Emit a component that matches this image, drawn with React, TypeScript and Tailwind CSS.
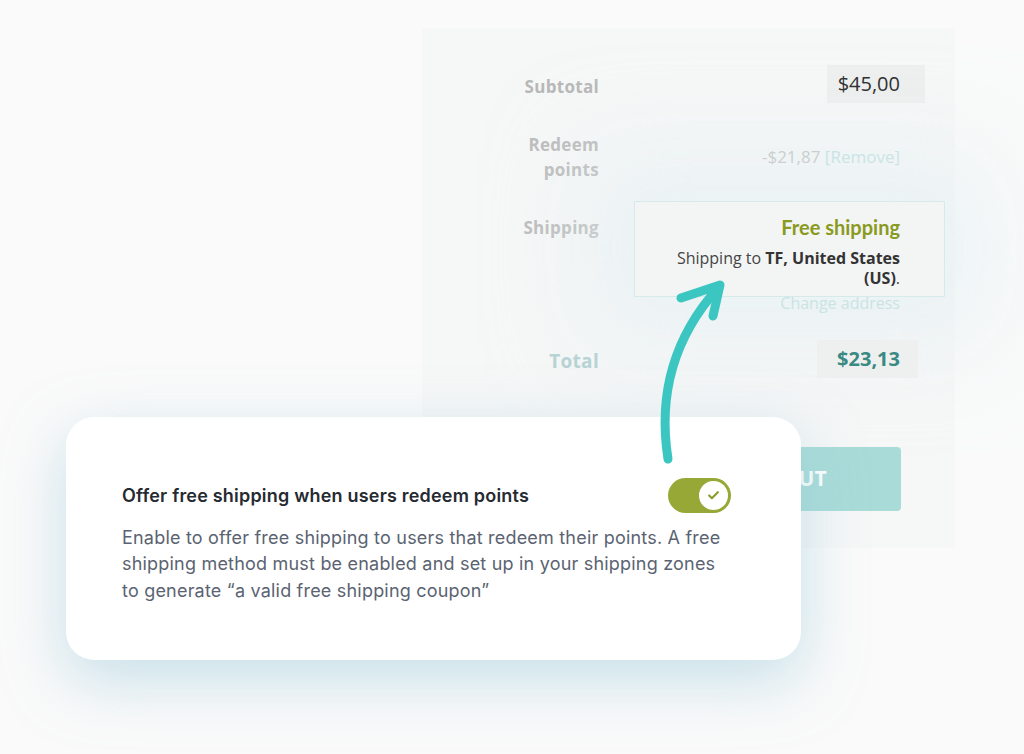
import { Check } from 'lucide-react';

// Cart total rows, values right-aligned at the same edge
function Totals() {
  return (
    <div className="ml-[422px] mt-[28px] h-[520px] w-[533px] bg-[#f6f7f7] pt-[37px] font-['Open_Sans',sans-serif]">
      {/* Subtotal */}
      <div className="grid h-[38px] grid-cols-[177px_1fr] items-center gap-x-[35px] pr-[55px]">
        <div className="mt-[5px] text-right text-[17px] font-bold tracking-[0.3px] text-[#b8b8b8]">Subtotal</div>
        <div className="flex justify-end">
          <span className="-mr-[25px] flex h-[38px] items-center bg-[#eeefef] pr-[25px] pl-[11px] text-[20px] text-[#2b2b2b]">
            $45,00
          </span>
        </div>
      </div>

      {/* Redeem points */}
      <div className="mt-[29px] grid grid-cols-[177px_1fr] items-center gap-x-[35px] pr-[55px]">
        <div className="text-right text-[17px] leading-[25px] font-bold tracking-[0.3px] text-[#bcbcbc]">
          Redeem
          <br />
          points
        </div>
        <div className="text-right text-[17px] text-[#c2c2c2]">
          -$21,87 <span className="text-[#bfe0e0]">[Remove]</span>
        </div>
      </div>

      {/* Shipping */}
      <div className="mt-[19px] grid grid-cols-[177px_1fr] items-start gap-x-[35px] pr-[55px]">
        <div className="mt-[14px] text-right text-[17px] leading-[25px] font-bold tracking-[0.3px] text-[#bcbcbc]">
          Shipping
        </div>
        <div className="flex flex-col items-end">
          <div className="-mr-[45px] w-[311px] border border-[#d6eaec] bg-[#f3f5f5] pt-[12px] pr-[44px] pb-[8px] text-right shadow-[0_0_90px_50px_rgba(225,238,242,0.55)]">
            <div className="font-['Lato',sans-serif] text-[20px] leading-[26px] font-bold text-[#8a9a1e]">Free shipping</div>
            <div className="mt-[8px] text-[16px] leading-[20px] text-[#454545]">
              Shipping to <b className="text-[#333]">TF, United States</b>
              <br />
              <b className="text-[#333]">(US)</b>.
            </div>
          </div>
          <div className="mt-[-2px] text-[16px] leading-[16px] text-[#cae3e4]">Change address</div>
        </div>
      </div>

      {/* Total */}
      <div className="mt-[29px] grid h-[38px] grid-cols-[177px_1fr] items-center gap-x-[35px] pr-[55px]">
        <div className="mt-[5px] text-right text-[19px] font-bold tracking-[0.3px] text-[#b7d3d5]">Total</div>
        <div className="flex justify-end">
          <span className="-mr-[18px] flex h-[38px] items-center bg-[#eef0f0] pr-[18px] pl-[20px] text-[20px] font-bold text-[#3b8983]">
            $23,13
          </span>
        </div>
      </div>

      {/* Checkout button, mostly hidden by the card */}
      <div className="mt-[69px] flex justify-end pr-[54px]">
        <div className="flex h-[64px] w-[330px] items-center justify-center rounded-[4px] bg-[#a9dcd8] pl-[68px] text-[21px] font-bold text-white">
          CHECKOUT
        </div>
      </div>
    </div>
  );
}

function Toggle() {
  return (
    <div className="flex h-[35px] w-[63px] shrink-0 items-center justify-end rounded-full bg-[#97a836] p-[3px]">
      <div className="flex h-[29px] w-[29px] items-center justify-center rounded-full bg-white">
        <Check className="h-[13px] w-[13px] text-[#8c9d2c]" strokeWidth={4} />
      </div>
    </div>
  );
}

function Arrow() {
  return (
    <svg
      className="pointer-events-none absolute top-[275px] left-[640px]"
      width="100"
      height="195"
      viewBox="0 0 100 195"
      fill="none"
      stroke="#3cc6c2"
      strokeWidth="9"
      strokeLinecap="round"
      strokeLinejoin="round"
    >
      <path d="M28 184 C 18 120, 34 62, 78 13" />
      <path d="M41 23 L 80 10 L 73 41" />
    </svg>
  );
}

export default function App() {
  return (
    <div className="relative h-[754px] w-[1024px] overflow-hidden bg-[#fafafa]">
      <Totals />

      <div className="absolute top-[417px] left-[66px] flex h-[243px] w-[735px] flex-col justify-center rounded-[28px] bg-white pt-[5px] pr-[70px] pl-[56px] font-['Inter',sans-serif] shadow-[0_20px_60px_rgba(150,200,218,0.5)]">
        <div className="flex items-center justify-between">
          <h2 className="text-[18px] font-semibold tracking-[0.2px] text-[#262a31]">
            Offer free shipping when users redeem points
          </h2>
          <Toggle />
        </div>
        <p className="mt-[12px] text-[18px] leading-[26.5px] tracking-[0.2px] text-[#5b6372]">
          Enable to offer free shipping to users that redeem their points. A free shipping method must be
          enabled and set up in your shipping zones to generate “a valid free shipping coupon”
        </p>
      </div>

      <Arrow />
    </div>
  );
}
